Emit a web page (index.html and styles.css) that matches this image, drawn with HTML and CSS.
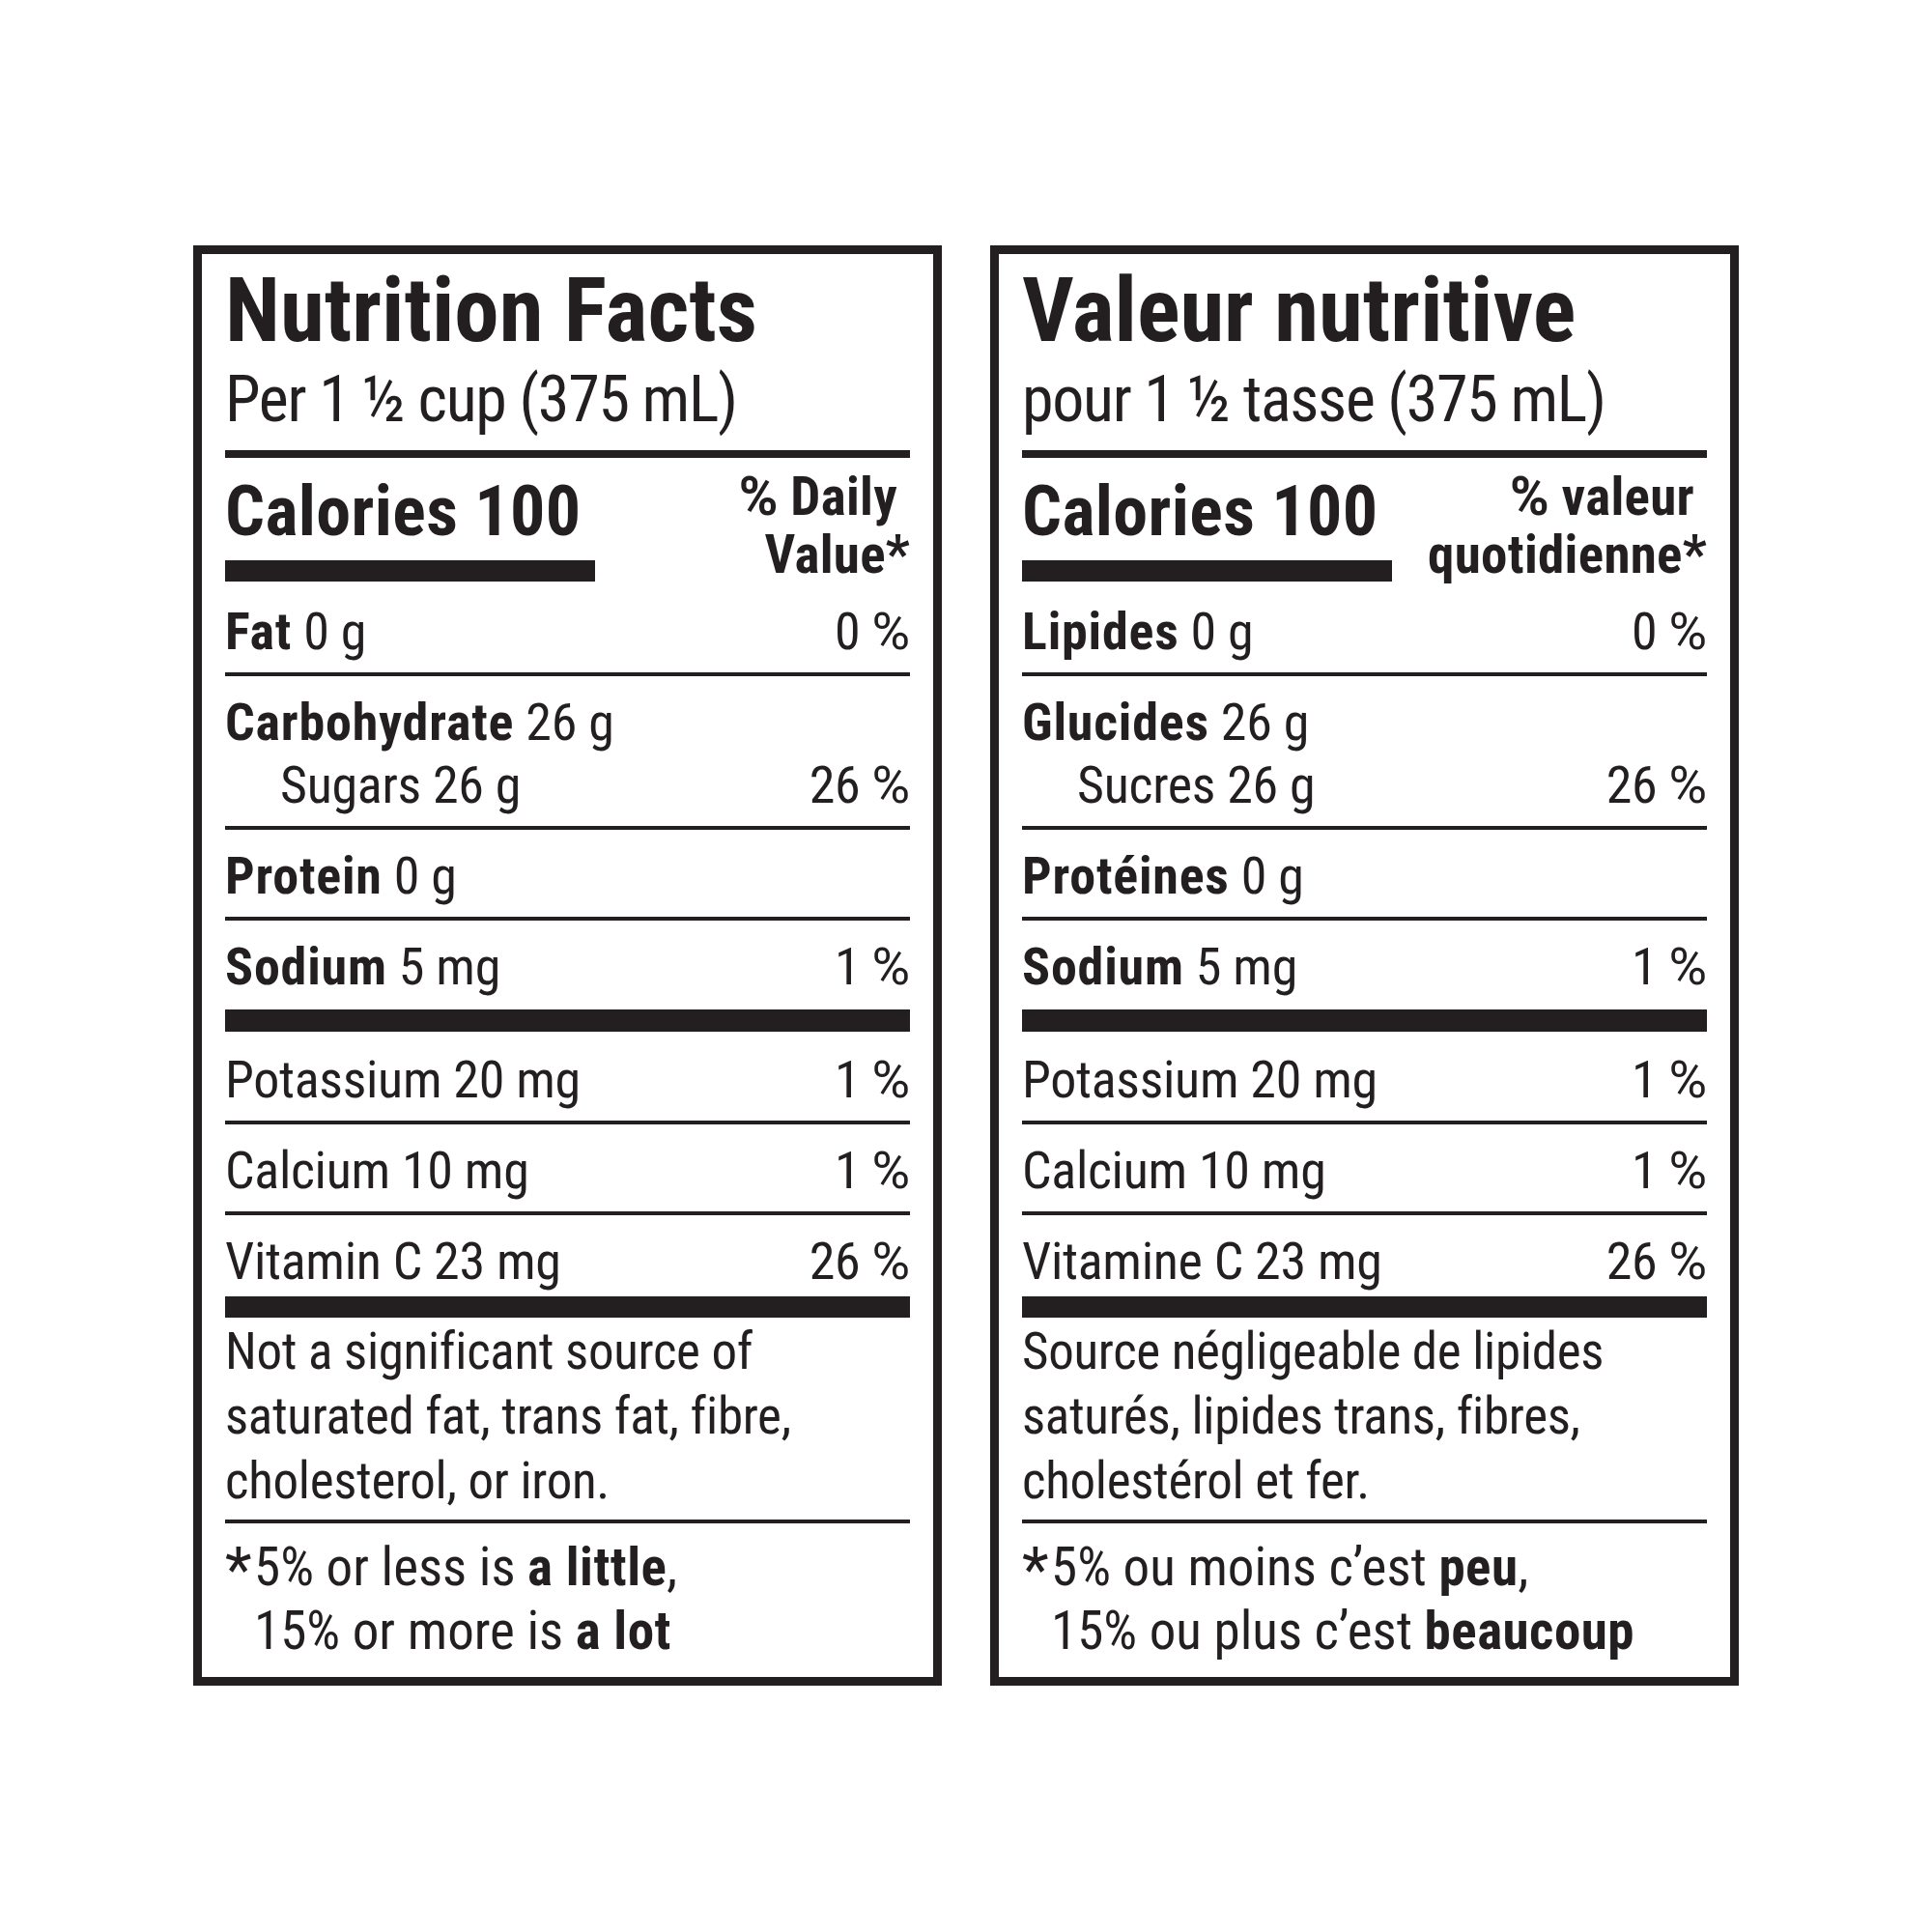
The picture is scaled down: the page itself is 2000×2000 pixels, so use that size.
FILE: index.html
```html
<!DOCTYPE html>
<html lang="en">
<head>
<meta charset="utf-8">
<title>Nutrition Facts / Valeur nutritive</title>
<link rel="stylesheet" href="styles.css">
</head>
<body>
<main class="labels">
  <section class="panel" lang="en">
    <h1 class="title">Nutrition Facts</h1>
    <p class="serving">Per 1 ½ cup (375 mL)</p>
    <div class="rule-md"></div>
    <div class="cal-head">
      <div class="cal-left">
        <div class="calories">Calories 100</div>
        <div class="cal-bar"></div>
      </div>
      <div class="dv-head"><span class="pct">%</span> Daily&nbsp;<br>Value*</div>
    </div>
    <div class="row"><span><b>Fat</b> 0 g</span><span>0 <span class="pct">%</span></span></div>
    <div class="row">
      <div class="stack">
        <div class="line"><span><b>Carbohydrate</b> 26 g</span></div>
        <div class="line sub"><span>Sugars 26 g</span><span>26 <span class="pct">%</span></span></div>
      </div>
    </div>
    <div class="row"><span><b>Protein</b> 0 g</span></div>
    <div class="row thick"><span><b>Sodium</b> 5 mg</span><span>1 <span class="pct">%</span></span></div>
    <div class="row after-thick"><span>Potassium 20 mg</span><span>1 <span class="pct">%</span></span></div>
    <div class="row"><span>Calcium 10 mg</span><span>1 <span class="pct">%</span></span></div>
    <div class="row thick last"><span>Vitamin C 23 mg</span><span>26 <span class="pct">%</span></span></div>
    <p class="note">Not a significant source of<br>saturated fat, trans fat, fibre,<br>cholesterol, or iron.</p>
    <div class="legend">
      <div><span class="star">*</span>5% or less is <b>a little</b>,</div>
      <div class="indent">15% or more is <b>a lot</b></div>
    </div>
  </section>

  <section class="panel" lang="fr">
    <h1 class="title">Valeur nutritive</h1>
    <p class="serving">pour 1 ½ tasse (375 mL)</p>
    <div class="rule-md"></div>
    <div class="cal-head">
      <div class="cal-left">
        <div class="calories">Calories 100</div>
        <div class="cal-bar"></div>
      </div>
      <div class="dv-head"><span class="pct">%</span> valeur&nbsp;<br>quotidienne*</div>
    </div>
    <div class="row"><span><b>Lipides</b> 0 g</span><span>0 <span class="pct">%</span></span></div>
    <div class="row">
      <div class="stack">
        <div class="line"><span><b>Glucides</b> 26 g</span></div>
        <div class="line sub"><span>Sucres 26 g</span><span>26 <span class="pct">%</span></span></div>
      </div>
    </div>
    <div class="row"><span><b>Protéines</b> 0 g</span></div>
    <div class="row thick"><span><b>Sodium</b> 5 mg</span><span>1 <span class="pct">%</span></span></div>
    <div class="row after-thick"><span>Potassium 20 mg</span><span>1 <span class="pct">%</span></span></div>
    <div class="row"><span>Calcium 10 mg</span><span>1 <span class="pct">%</span></span></div>
    <div class="row thick last"><span>Vitamine C 23 mg</span><span>26 <span class="pct">%</span></span></div>
    <p class="note">Source négligeable de lipides<br>saturés, lipides trans, fibres,<br>cholestérol et fer.</p>
    <div class="legend">
      <div><span class="star">*</span>5% ou moins c’est <b>peu</b>,</div>
      <div class="indent">15% ou plus c’est <b>beaucoup</b></div>
    </div>
  </section>
</main>
</body>
</html>
```

FILE: styles.css
```css
* {
  box-sizing: border-box;
  margin: 0;
  padding: 0;
}

html, body {
  background: #ffffff;
}

body {
  color: #231f20;
  font-family: "Roboto", "Liberation Sans", sans-serif;
  font-stretch: 75%;
  font-weight: 400;
}

b {
  font-weight: 700;
}

.labels {
  display: flex;
  gap: 50px;
  padding: 254px 0 0 200px;
}

.panel {
  width: 775px;
  border: 9px solid #231f20;
  padding: 12px 24px 15px;
  display: flex;
  flex-direction: column;
}

.title {
  font-size: 93px;
  line-height: 93px;
  font-weight: 700;
  white-space: nowrap;
}

.serving {
  font-size: 66px;
  line-height: 66px;
  margin-top: 13px;
  letter-spacing: -1.3px;
  white-space: nowrap;
}

.rule-md {
  height: 8px;
  background: #231f20;
  margin-top: 19px;
}

.cal-head {
  display: flex;
  justify-content: space-between;
  align-items: flex-start;
}

.cal-left {
  width: 383px;
  padding-top: 20px;
  flex: none;
}

.calories {
  font-size: 72px;
  line-height: 72px;
  font-weight: 700;
  letter-spacing: 0.4px;
  white-space: nowrap;
}

.cal-bar {
  height: 22px;
  background: #231f20;
  margin-top: 14px;
}

.dv-head {
  font-size: 55px;
  line-height: 60px;
  font-weight: 700;
  text-align: right;
  letter-spacing: 0.3px;
  padding: 10px 0 2px;
  white-space: nowrap;
}

.pct {
  font-stretch: 100%;
  letter-spacing: 0;
}

.row {
  display: flex;
  justify-content: space-between;
  font-size: 54px;
  line-height: 54px;
  letter-spacing: -0.3px;
  padding: 21px 0 15px;
  border-bottom: 4px solid #231f20;
  white-space: nowrap;
}

.row b {
  letter-spacing: 0.8px;
}

.row.thick {
  padding-bottom: 17px;
  border-bottom-width: 23px;
}

.row.after-thick {
  padding-top: 23px;
}

.row.last {
  padding-bottom: 9px;
  border-bottom-width: 22px;
}

.stack {
  flex: 1;
  display: flex;
  flex-direction: column;
  gap: 11px;
}

.line {
  display: flex;
  justify-content: space-between;
}

.line.sub {
  padding-left: 57px;
}

.note {
  font-size: 53px;
  line-height: 67px;
  letter-spacing: -0.3px;
  padding: 2px 0 6px;
  border-bottom: 4px solid #231f20;
  white-space: nowrap;
}

.legend {
  font-size: 55px;
  line-height: 66px;
  padding-top: 12px;
  white-space: nowrap;
}

.legend b {
  letter-spacing: 0.5px;
}

.star {
  display: inline-block;
  width: 30px;
  font-size: 64px;
  line-height: 0;
  vertical-align: -6px;
}

.indent {
  padding-left: 30px;
}
```
